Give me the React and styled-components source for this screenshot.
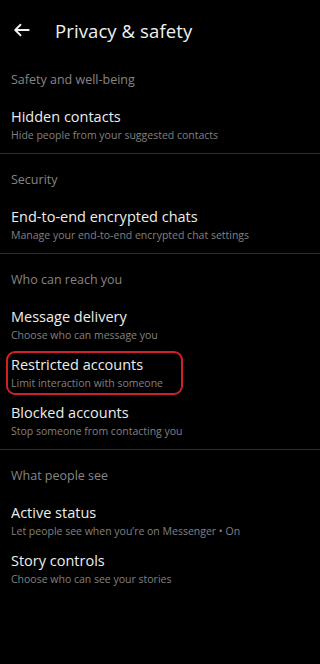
import React from 'react';
import styled, { createGlobalStyle } from 'styled-components';

const GlobalStyle = createGlobalStyle`
  html, body {
    margin: 0;
    padding: 0;
    background: #000;
  }
  body {
    font-family: "Open Sans", "Noto Sans", sans-serif;
    -webkit-font-smoothing: antialiased;
  }
`

const Screen = styled.div`
  width: 320px;
  min-height: 664px;
  background: #000;
  color: #ececec;
`

const TopBar = styled.header`
  display: flex;
  align-items: center;
  height: 48px;
  padding: 6px 0 0 12px;
`

const BackButton = styled.button`
  display: flex;
  align-items: center;
  justify-content: center;
  width: 20px;
  height: 20px;
  padding: 0;
  border: 0;
  background: none;
  color: #f2f2f2;
`

const Title = styled.h1`
  margin: 0 0 0 23px;
  font-size: 18.5px;
  font-weight: 500;
  letter-spacing: 0.1px;
  color: #f0f0f0;
`

const Section = styled.section`
  padding: 16px 0 4px;
  border-bottom: ${({ last }) => (last ? 'none' : '1px solid #2e2e2e')};
`

const SectionLabel = styled.div`
  padding: 0 11px;
  margin-bottom: 11px;
  font-size: 12.5px;
  line-height: 20px;
  color: #858585;
`

const Item = styled.div`
  position: relative;
  padding: 6px 11px;

  ${({ highlighted }) => highlighted && `
    &::after {
      content: '';
      position: absolute;
      left: 6px;
      top: 2px;
      width: 173px;
      height: 40px;
      border: 2px solid #d2202b;
      border-radius: 9px;
      pointer-events: none;
    }
  `}
`

const ItemTitle = styled.div`
  font-size: 14.5px;
  line-height: 20px;
  color: #ededed;
`

const ItemSub = styled.div`
  font-size: 10.5px;
  line-height: 16px;
  color: #808080;
  white-space: nowrap;
`

const sections = [
  {
    label: 'Safety and well-being',
    items: [{ title: 'Hidden contacts', sub: 'Hide people from your suggested contacts' }],
  },
  {
    label: 'Security',
    items: [{ title: 'End-to-end encrypted chats', sub: 'Manage your end-to-end encrypted chat settings' }],
  },
  {
    label: 'Who can reach you',
    items: [
      { title: 'Message delivery', sub: 'Choose who can message you' },
      { title: 'Restricted accounts', sub: 'Limit interaction with someone', highlighted: true },
      { title: 'Blocked accounts', sub: 'Stop someone from contacting you' },
    ],
  },
  {
    label: 'What people see',
    items: [
      { title: 'Active status', sub: 'Let people see when you\u2019re on Messenger \u2022 On' },
      { title: 'Story controls', sub: 'Choose who can see your stories' },
    ],
  },
]

const BackArrow = () => (
  <svg width="18" height="18" viewBox="0 0 24 24" fill="none" stroke="currentColor" strokeWidth="2.4" strokeLinecap="round" strokeLinejoin="round">
    <path d="M21 12H3.5" />
    <path d="M10 5l-7 7 7 7" />
  </svg>
)

export default function App() {
  return (
    <Screen>
      <GlobalStyle />
      <TopBar>
        <BackButton aria-label="Back">
          <BackArrow />
        </BackButton>
        <Title>Privacy &amp; safety</Title>
      </TopBar>
      {sections.map((s, i) => (
        <Section key={s.label} last={i === sections.length - 1}>
          <SectionLabel>{s.label}</SectionLabel>
          {s.items.map(item => (
            <Item key={item.title} highlighted={item.highlighted}>
              <ItemTitle>{item.title}</ItemTitle>
              <ItemSub>{item.sub}</ItemSub>
            </Item>
          ))}
        </Section>
      ))}
    </Screen>
  )
}
